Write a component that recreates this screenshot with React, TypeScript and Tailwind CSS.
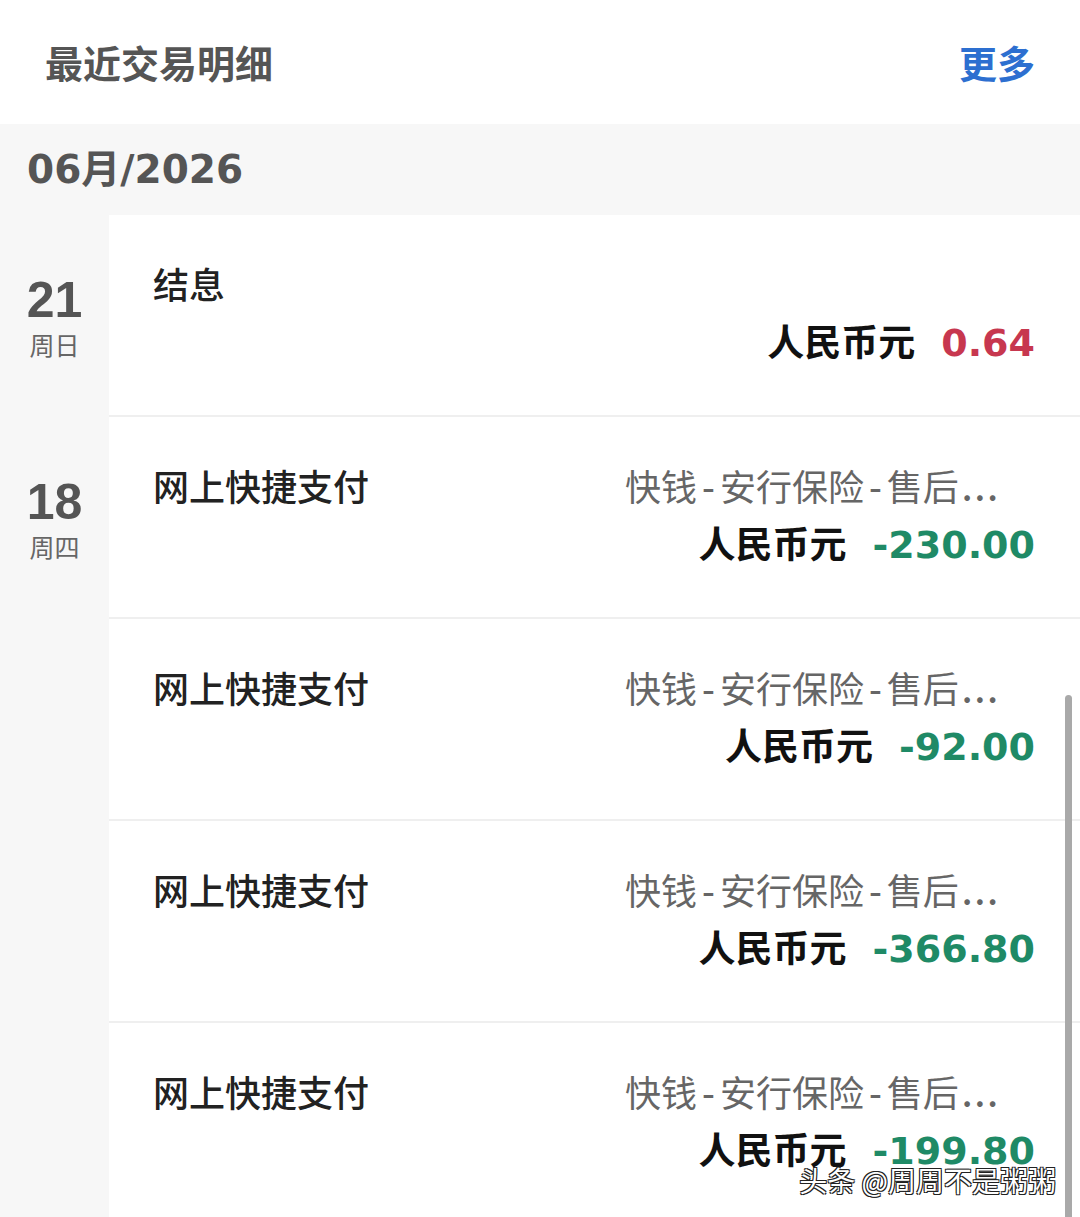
import type { ReactNode } from 'react'

type Tx = {
  title: string
  desc?: string
  amount: string
  income?: boolean
}

type DayGroup = {
  day: string
  week: string
  items: Tx[]
}

const groups: DayGroup[] = [
  {
    day: '21',
    week: '周日',
    items: [{ title: '结息', amount: '0.64', income: true }],
  },
  {
    day: '18',
    week: '周四',
    items: [
      { title: '网上快捷支付', desc: '快钱-安行保险-售后...', amount: '-230.00' },
      { title: '网上快捷支付', desc: '快钱-安行保险-售后...', amount: '-92.00' },
      { title: '网上快捷支付', desc: '快钱-安行保险-售后...', amount: '-366.80' },
      { title: '网上快捷支付', desc: '快钱-安行保险-售后...', amount: '-199.80' },
    ],
  },
]

const cjk = "font-['Noto_Sans_CJK_SC','Noto_Sans',sans-serif]"

// hyphens and dots in the merchant text are set wider than the CJK font gives them
function Desc({ text }: { text: string }) {
  const parts: ReactNode[] = []
  text.split('-').forEach((chunk, i) => {
    if (i > 0)
      parts.push(
        <span key={`h${i}`} className="mx-[5px] font-medium">
          -
        </span>,
      )
    const dots = chunk.endsWith('...')
    parts.push(<span key={`c${i}`}>{dots ? chunk.slice(0, -3) : chunk}</span>)
    if (dots)
      parts.push(
        <span key={`d${i}`} className="ml-[3px] font-medium tracking-[2px]">
          ...
        </span>,
      )
  })
  return <>{parts}</>
}

function Row({ tx }: { tx: Tx }) {
  return (
    <div className="flex h-[202px] flex-col border-b-2 border-[#efefef] bg-white pt-[50px]">
      <div className="flex h-[36px] items-center justify-between">
        <span className={`${cjk} pl-[44px] text-[36px] leading-[36px] font-medium text-[#222]`}>
          {tx.title}
        </span>
        {tx.desc ? (
          <span className={`${cjk} pr-[80px] text-[36px] leading-[36px] text-[#666]`}>
            <Desc text={tx.desc} />
          </span>
        ) : null}
      </div>
      <div className="mt-[20px] flex items-baseline justify-end gap-[26px] pr-[45px]">
        <span className={`${cjk} text-[37px] leading-[38px] font-bold text-[#111]`}>人民币元</span>
        <span
          className={`font-['DejaVu_Sans',sans-serif] text-[38px] leading-[38px] font-bold ${
            tx.income ? 'text-[#c7374f]' : 'text-[#1f8a66]'
          }`}
        >
          {tx.amount}
        </span>
      </div>
    </div>
  )
}

export default function App() {
  return (
    <div className="relative h-[1217px] w-[1080px] overflow-hidden bg-[#f7f7f7]">
      <header className="flex h-[124px] items-center justify-between bg-white pr-[45px] pl-[45px]">
        <h1 className={`${cjk} text-[38px] leading-none font-bold text-[#555]`}>最近交易明细</h1>
        <button type="button" className={`${cjk} text-[38px] leading-none font-bold text-[#2d6fd0]`}>
          更多
        </button>
      </header>

      <div className="flex h-[91px] items-center pl-[27px]">
        <span
          className={`font-['DejaVu_Sans','Noto_Sans_CJK_SC',sans-serif] text-[39px] leading-none font-bold text-[#555]`}
        >
          06月/2026
        </span>
      </div>

      {groups.map((g) => (
        <section key={g.day} className="flex">
          <div className="flex w-[109px] shrink-0 flex-col items-center pt-[60px]">
            <span className="font-['Liberation_Sans',sans-serif] text-[50px] leading-[50px] font-bold text-[#555]">
              {g.day}
            </span>
            <span className={`${cjk} mt-[6px] text-[25px] leading-[26px] text-[#666]`}>{g.week}</span>
          </div>
          <div className="flex-1">
            {g.items.map((tx, i) => (
              <Row key={i} tx={tx} />
            ))}
          </div>
        </section>
      ))}

      {/* scroll indicator */}
      <div className="absolute top-[695px] right-[8px] bottom-0 w-[7px] rounded-t-full bg-[#a9a9a9]" />

      {/* watermark */}
      <div
        className={`${cjk} absolute right-[24px] bottom-[23px] text-[28px] leading-none text-white [text-shadow:-1px_-1px_0_#222,1px_-1px_0_#222,-1px_1px_0_#222,1px_1px_0_#222]`}
      >
        头条 @周周不是粥粥
      </div>
    </div>
  )
}
